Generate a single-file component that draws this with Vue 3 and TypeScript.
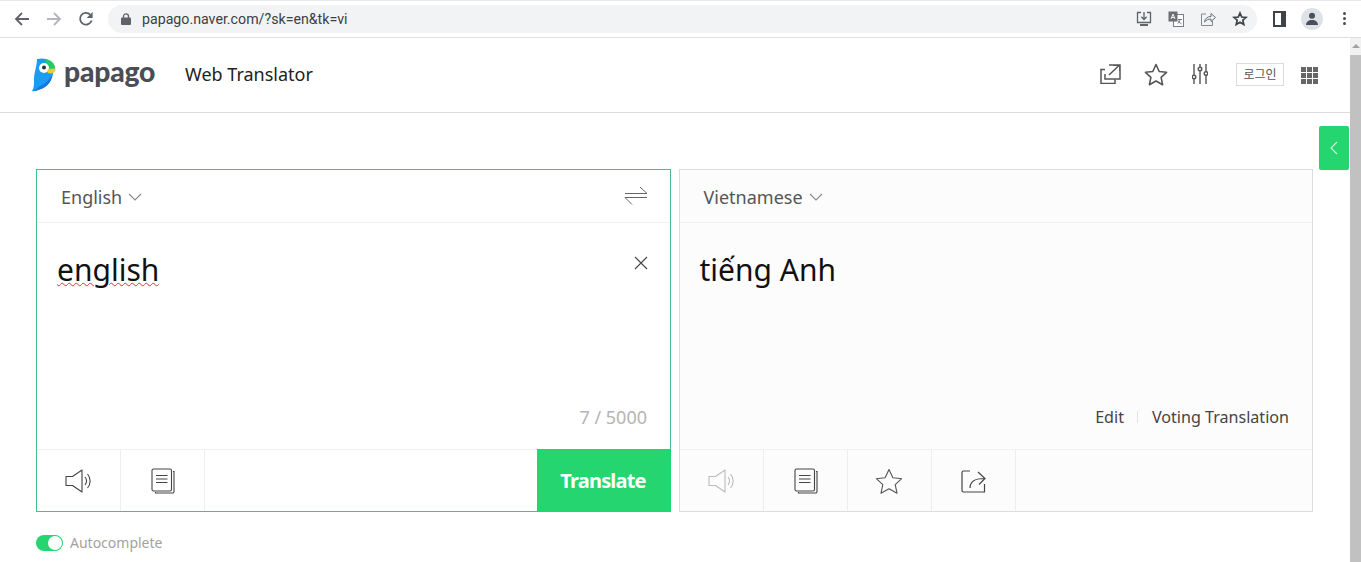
<template>
  <div class="page">
    <div class="browser-bar">
      <div class="nav-icons">
        <svg width="16" height="16" viewBox="0 0 16 16" class="ico-back"><path d="M15 8H2M8 2 2 8l6 6" fill="none" stroke="#5f6368" stroke-width="1.800" /></svg>
        <svg width="16" height="16" viewBox="0 0 16 16"><path d="M1 8h13M8 2l6 6-6 6" fill="none" stroke="#b4b6b9" stroke-width="1.800" /></svg>
        <svg width="16" height="16" viewBox="0 0 16 16"><path d="M13.600 9.500A5.900 5.900 0 1 1 12.200 3.600" fill="none" stroke="#5f6368" stroke-width="1.800" /><path d="M14.600 1v6h-6z" fill="#5f6368" /></svg>
      </div>
      <div class="address">
        <svg width="10" height="12" viewBox="0 0 10 12"><path d="M2.500 5V3.400a2.500 2.500 0 0 1 5 0V5" fill="none" stroke="#5f6368" stroke-width="1.300" /><rect y="4.500" width="10" height="7.500" rx="1" fill="#5f6368" /></svg>
        <span class="url">papago.naver.com/?sk=en&amp;tk=vi</span>
        <div class="address-icons">
          <svg width="16" height="16" viewBox="0 0 16 16"><path d="M5 1.500H1.500v10h13v-10H11M8 1v7M5.300 5.800 8 8.500l2.700-2.700" fill="none" stroke="#5f6368" stroke-width="1.300" /><path d="M4 13h8v2H4z" fill="#5f6368" /></svg>
          <svg width="16" height="16" viewBox="0 0 16 16"><rect x="5.500" y="3.500" width="10" height="12" fill="#fff" stroke="#7b7f84" /><rect x="0.500" y="0.500" width="9" height="10" fill="#6a6e73" /><path d="M3 8 5 3l2 5M3.800 6.500h2.400" fill="none" stroke="#fff" stroke-width="0.900" /><path d="M10 8.500h4M11.800 8.500c0 1.800-1 3.200-2.300 4.200M10.200 9.800c.6 1.300 1.700 2.300 3.300 3" fill="none" stroke="#5f6368" stroke-width="0.900" /></svg>
          <svg width="16" height="16" viewBox="0 0 16 16"><path d="M6 3H1.500v11.500h11V10" fill="none" stroke="#85888c" /><path d="M4.500 11c.5-3.500 3-5.500 6.500-5.500V2.500L15.500 6.500 11 10.500V8c-2.800 0-4.800 1-6.500 3z" fill="none" stroke="#6a6e73" /></svg>
          <svg width="16" height="16" viewBox="0 0 16 16"><path d="m8 2 1.700 4 4.300.4-3.200 2.800 1 4.200L8 11.200l-3.800 2.200 1-4.200L2 6.400 6.300 6z" fill="none" stroke="#3f4246" stroke-width="1.700" /></svg>
        </div>
      </div>
      <div class="browser-right">
        <span class="side-panel"></span>
        <span class="profile">
          <svg width="14" height="14" viewBox="0 0 14 14"><circle cx="7" cy="3.800" r="3" fill="#4a4f5c" /><path d="M1 13c0-3 2.500-5 6-5s6 2 6 5z" fill="#4a4f5c" /></svg>
        </span>
        <span class="kebab"><i></i><i></i><i></i></span>
      </div>
    </div>

    <div class="viewport">
      <div class="content">
        <header class="site-header">
          <div class="brand">
            <svg class="parrot" width="25" height="34" viewBox="0 0 25 34">
              <path d="M5 1c4-1 10-1 13 2 3 3 4 8 3 13-1 7-6 13-12 15-3 1-7 3-9 2 2-3 2-6 2-11C2 14 5 8 5 1z" fill="#1a9cf0" />
              <path d="M8 28c5-2 9-6 12-11l-1 5c-2 4-6 8-10 9-3 1-6 2-8 2 2-1 5-3 7-5z" fill="#1676e6" />
              <path d="M12 1.500c5-.5 10 2 11 7.500 0 1 0 1.500-.5 2.500l-6-.5C16 7 14 4 12 1.500z" fill="#25c966" />
              <circle cx="12" cy="10" r="5" fill="#fff" />
              <circle cx="12" cy="9.500" r="2" fill="#27303a" />
              <path d="M16 11l7.500-.5c.5 2.500-2 5-5.500 5-1.500 0-2.500-1-3-2z" fill="#f7c92f" />
            </svg>
            <span class="wordmark">papago</span>
          </div>
          <span class="web-title">Web Translator</span>
          <div class="header-tools">
            <svg class="tool tool-open" width="21" height="20" viewBox="0 0 21 20"><path d="M5 5.500H1V19.500h14V15.500" fill="none" stroke="#555" stroke-width="1.500" /><path d="M5 10v5h15V1H9M9 11 19 1.500M13.500 1.200H19.800V7" fill="none" stroke="#555" stroke-width="1.500" /></svg>
            <svg class="tool tool-star" width="24" height="23" viewBox="0 0 24 23"><path d="m12 1.500 3.200 7 7.300.8-5.400 5 1.500 7.400L12 18l-6.600 3.700 1.500-7.400-5.400-5 7.300-.8z" fill="none" stroke="#555" stroke-width="1.600" stroke-linejoin="round" /></svg>
            <svg class="tool tool-sliders" width="16" height="20" viewBox="0 0 16 20"><path d="M2 0v20M8 0v20M14 0v20" stroke="#555" stroke-width="1.400" /><circle cx="2" cy="13" r="1.800" fill="#fff" stroke="#555" stroke-width="1.400" /><circle cx="8" cy="5" r="1.800" fill="#fff" stroke="#555" stroke-width="1.400" /><circle cx="14" cy="9.500" r="1.800" fill="#fff" stroke="#555" stroke-width="1.400" /></svg>
            <span class="login">로그인</span>
            <div class="apps"><i v-for="n in 9" :key="n"></i></div>
          </div>
        </header>

        <main class="translator">
          <section class="panel source">
            <div class="panel-head">
              <span class="lang">English</span>
              <svg class="chev" width="14" height="8" viewBox="0 0 14 8"><path d="m1 1 6 6 6-6" fill="none" stroke="#888" stroke-width="1.100" /></svg>
              <svg class="swap" width="24" height="20" viewBox="0 0 24 20"><path d="M1 7.500h22L16 1M23 11.500H1l7 7" fill="none" stroke="#666" stroke-width="1" /></svg>
            </div>
            <div class="panel-body">
              <div class="text-row">
                <span class="big-text misspelled">english</span>
                <svg class="clear" width="14" height="14" viewBox="0 0 14 14"><path d="m1 1 12 12M13 1 1 13" stroke="#444" stroke-width="1.100" /></svg>
              </div>
              <div class="counter">7 / 5000</div>
            </div>
            <div class="panel-foot">
              <button class="cell" aria-label="Listen">
                <svg width="28" height="24" viewBox="0 0 28 24"><path d="M1 7.500h6.500L17 1v22l-9.500-6.500H1z" fill="none" stroke="#444" stroke-width="1.100" stroke-linejoin="round" /><path d="M20 8c2 2.500 2 5.500 0 8M22.500 5c3.500 4 3.500 10 0 14" fill="none" stroke="#444" stroke-width="1.100" /></svg>
              </button>
              <button class="cell" aria-label="Copy">
                <svg width="24" height="26" viewBox="0 0 24 26"><path d="M22 3.500h1v20a1.500 1.500 0 0 1-1.500 1.500H4.500v-1" fill="none" stroke="#444" stroke-width="1.100" /><rect x="1" y="1" width="19.500" height="22" rx="1.500" fill="#fff" stroke="#444" stroke-width="1.100" /><path d="M5 7.500h11.500M5 11h11.500M5 14.500h11.500" stroke="#444" stroke-width="1.100" /></svg>
              </button>
              <button class="translate">Translate</button>
            </div>
          </section>

          <section class="panel target">
            <div class="panel-head">
              <span class="lang">Vietnamese</span>
              <svg class="chev" width="14" height="8" viewBox="0 0 14 8"><path d="m1 1 6 6 6-6" fill="none" stroke="#888" stroke-width="1.100" /></svg>
            </div>
            <div class="panel-body">
              <div class="text-row">
                <span class="big-text">tiếng Anh</span>
              </div>
              <div class="result-links">
                <span>Edit</span>
                <i class="divider"></i>
                <span>Voting Translation</span>
              </div>
            </div>
            <div class="panel-foot">
              <button class="cell" aria-label="Listen">
                <svg width="28" height="24" viewBox="0 0 28 24"><path d="M1 7.500h6.500L17 1v22l-9.500-6.500H1z" fill="none" stroke="#bbb" stroke-width="1.100" stroke-linejoin="round" /><path d="M20 8c2 2.500 2 5.500 0 8M22.500 5c3.500 4 3.500 10 0 14" fill="none" stroke="#bbb" stroke-width="1.100" /></svg>
              </button>
              <button class="cell" aria-label="Copy">
                <svg width="24" height="26" viewBox="0 0 24 26"><path d="M22 3.500h1v20a1.500 1.500 0 0 1-1.500 1.500H4.500v-1" fill="none" stroke="#444" stroke-width="1.100" /><rect x="1" y="1" width="19.500" height="22" rx="1.500" fill="#fcfcfc" stroke="#444" stroke-width="1.100" /><path d="M5 7.500h11.500M5 11h11.500M5 14.500h11.500" stroke="#444" stroke-width="1.100" /></svg>
              </button>
              <button class="cell star-cell" aria-label="Favourite">
                <svg width="28" height="26" viewBox="0 0 28 26"><path d="m14 1.500 3.900 8.200 8.800 1-6.500 6 1.800 8.500L14 20.800l-8 4.400 1.800-8.500-6.500-6 8.800-1z" fill="none" stroke="#555" stroke-width="1.100" stroke-linejoin="round" /></svg>
              </button>
              <button class="cell" aria-label="Share">
                <svg width="26" height="24" viewBox="0 0 26 24"><path d="M9 2H2.500A1.500 1.500 0 0 0 1 3.500v18A1.500 1.500 0 0 0 2.500 23h21v-8" fill="none" stroke="#444" stroke-width="1.200" /><path d="M9 19c0-6 4-9.500 14-9.500M17 3l7 6.500-6 6" fill="none" stroke="#444" stroke-width="1.200" /></svg>
              </button>
            </div>
          </section>
        </main>

        <div class="autocomplete">
          <span class="switch"><span class="knob"></span></span>
          <span>Autocomplete</span>
        </div>

        <button class="side-tab" aria-label="Open side menu">
          <svg width="8" height="14" viewBox="0 0 8 14"><path d="M7 1 1 7l6 6" fill="none" stroke="#d4f5e2" stroke-width="1.100" /></svg>
        </button>
      </div>

      <div class="scrollbar">
        <span class="scroll-arrow"></span>
        <span class="scroll-thumb"></span>
      </div>
    </div>
  </div>
</template>

<script setup lang="ts">
// static screen, nothing to wire up
</script>

<style>
html,
body {
  margin: 0;
  overflow: hidden;
  background: #fff;
}
</style>

<style scoped>
.page {
  width: 1361px;
  height: 562px;
  display: flex;
  flex-direction: column;
  overflow: hidden;
  font-family: "Noto Sans", "Open Sans", sans-serif;
  color: #333;
}

.browser-bar {
  height: 38px;
  box-sizing: border-box;
  flex: none;
  display: flex;
  align-items: center;
  background: #fff;
  border-top: 1px solid #e6e8eb;
  border-bottom: 1px solid #dcdee0;
  padding: 0 0 1px 14px;
}

.nav-icons {
  display: flex;
  gap: 16px;
  width: 94px;
  flex: none;
  align-items: center;
}

.address {
  width: 1149px;
  height: 28px;
  flex: none;
  box-sizing: border-box;
  border-radius: 14px;
  background: #f1f3f4;
  display: flex;
  align-items: center;
  padding: 0 9px 0 13px;
}

.url {
  margin-left: 11px;
  font-family: "Roboto", "Liberation Sans", sans-serif;
  font-size: 14.200px;
  color: #3c4043;
}

.address-icons {
  margin-left: auto;
  display: flex;
  gap: 16px;
  align-items: center;
}

.browser-right {
  flex: 1;
  display: flex;
  align-items: center;
  padding-left: 16px;
}

.side-panel {
  height: 12px;
  border: 2px solid #3f4246;
  border-right-width: 5px;
  background: #fff;
  box-sizing: content-box;
  width: 6px;
}

.profile {
  margin-left: 15px;
  width: 22px;
  height: 22px;
  border-radius: 50%;
  background: #dfe1e8;
  display: flex;
  align-items: center;
  justify-content: center;
}

.kebab {
  margin-left: 20px;
  display: flex;
  flex-direction: column;
  gap: 2px;
}

.kebab i {
  width: 3px;
  height: 3px;
  border-radius: 50%;
  background: #4a4d50;
}

.viewport {
  flex: 1;
  display: flex;
  min-height: 0;
}

.content {
  position: relative;
  flex: 1;
  min-width: 0;
}

.site-header {
  height: 75px;
  box-sizing: border-box;
  border-bottom: 1px solid #dcdcdc;
  display: flex;
  align-items: center;
  padding: 0 32px 2px 32px;
}

.brand {
  display: flex;
  align-items: center;
  gap: 7px;
  width: 153px;
  margin-top: 2px;
}

.wordmark {
  font-family: "Lato", "Noto Sans", sans-serif;
  font-weight: 900;
  font-size: 28.300px;
  line-height: 1;
  letter-spacing: -0.200px;
  color: #4a4d55;
  margin-top: -7px;
}

.web-title {
  font-size: 18px;
  color: #222;
}

.header-tools {
  margin-left: auto;
  display: flex;
  align-items: center;
}

.tool-star {
  margin-left: 23px;
}

.tool-sliders {
  margin-left: 24px;
}

.login {
  margin-left: 28px;
  width: 48px;
  height: 23px;
  box-sizing: border-box;
  border: 1px solid #dcdcdc;
  font-family: "Noto Sans CJK KR", sans-serif;
  font-size: 12px;
  line-height: 20px;
  text-align: center;
  color: #555;
}

.apps {
  margin-left: 17px;
  width: 17px;
  margin-top: 3px;
  display: grid;
  grid-template-columns: repeat(3, 5px);
  gap: 1px;
}

.apps i {
  height: 5px;
  background: #666;
}

.translator {
  margin: 56px 37px 0 36px;
  display: grid;
  grid-template-columns: 635px 634px;
  gap: 8px;
}

.panel {
  height: 343px;
  box-sizing: border-box;
  display: flex;
  flex-direction: column;
  border: 1px solid #dddddd;
  background: #fcfcfc;
}

.source {
  background: #fff;
  border-color: #45c08a;
}

.panel-head {
  height: 53px;
  flex: none;
  box-sizing: border-box;
  border-bottom: 1px solid #f1f1f1;
  display: flex;
  align-items: center;
  padding: 2px 22px 0 24px;
}

.target .panel-head {
  padding-left: 23.500px;
}

.lang {
  font-size: 18px;
  color: #555;
}

.chev {
  margin-left: 6px;
}

.swap {
  margin-left: auto;
  margin-top: -3px;
}

.panel-body {
  flex: 1;
  display: flex;
  flex-direction: column;
  padding: 25px 23px 20px 20px;
}

.target .panel-body {
  padding-left: 19.500px;
}

.text-row {
  flex: 1;
  display: flex;
  align-items: flex-start;
  justify-content: space-between;
}

.big-text {
  font-size: 30px;
  line-height: 44px;
  color: #111;
}

.misspelled {
  text-decoration: underline wavy #d33;
  text-decoration-thickness: 1px;
  text-underline-offset: 1px;
}

.clear {
  margin-top: 8px;
  margin-right: -1px;
}

.counter {
  text-align: right;
  font-size: 18px;
  line-height: 24px;
  color: #b4b4b4;
}

.result-links {
  display: flex;
  align-items: center;
  justify-content: flex-end;
  font-size: 16.100px;
  line-height: 24px;
  color: #444;
}

.divider {
  width: 1px;
  height: 12px;
  background: #e2e2e2;
  margin: 0 14px 0 13px;
}

.panel-foot {
  height: 62px;
  flex: none;
  box-sizing: border-box;
  border-top: 1px solid #f1f1f1;
  display: flex;
}

.cell {
  width: 84px;
  flex: none;
  border: 0;
  border-right: 1px solid #eeeeee;
  background: transparent;
  padding: 0;
  display: flex;
  align-items: center;
  justify-content: center;
}

.star-cell svg {
  margin-left: -2px;
}

.translate {
  margin: -1px -1px -1px auto;
  width: 134px;
  border: 0;
  background: #25d56f;
  color: #fff;
  font-family: inherit;
  font-size: 20px;
  font-weight: 700;
  letter-spacing: -0.800px;
  padding: 0 2px 0 0;
}

.autocomplete {
  margin: 21px 0 0 36px;
  display: flex;
  align-items: center;
  gap: 7px;
  font-size: 14px;
  line-height: 20px;
  color: #a2a2a2;
}

.switch {
  width: 27px;
  height: 16px;
  border-radius: 8px;
  background: #25d56f;
  position: relative;
}

.knob {
  position: absolute;
  right: 1px;
  top: 1px;
  width: 14px;
  height: 14px;
  border-radius: 50%;
  background: #fff;
}

.side-tab {
  position: absolute;
  top: 88px;
  right: 1px;
  width: 30px;
  height: 44px;
  border: 0;
  border-radius: 2px;
  background: #25d56f;
  padding: 0;
  display: flex;
  align-items: center;
  justify-content: center;
}

.scrollbar {
  width: 11px;
  flex: none;
  display: flex;
  flex-direction: column;
  background: #f1f1f1;
}

.scroll-arrow {
  height: 17px;
  flex: none;
  position: relative;
}

.scroll-arrow::after {
  content: "";
  position: absolute;
  left: 2px;
  top: 6px;
  border-left: 4px solid transparent;
  border-right: 4px solid transparent;
  border-bottom: 4px solid #a3a3a3;
}

.scroll-thumb {
  flex: 1;
  background: #c1c1c1;
}
</style>
